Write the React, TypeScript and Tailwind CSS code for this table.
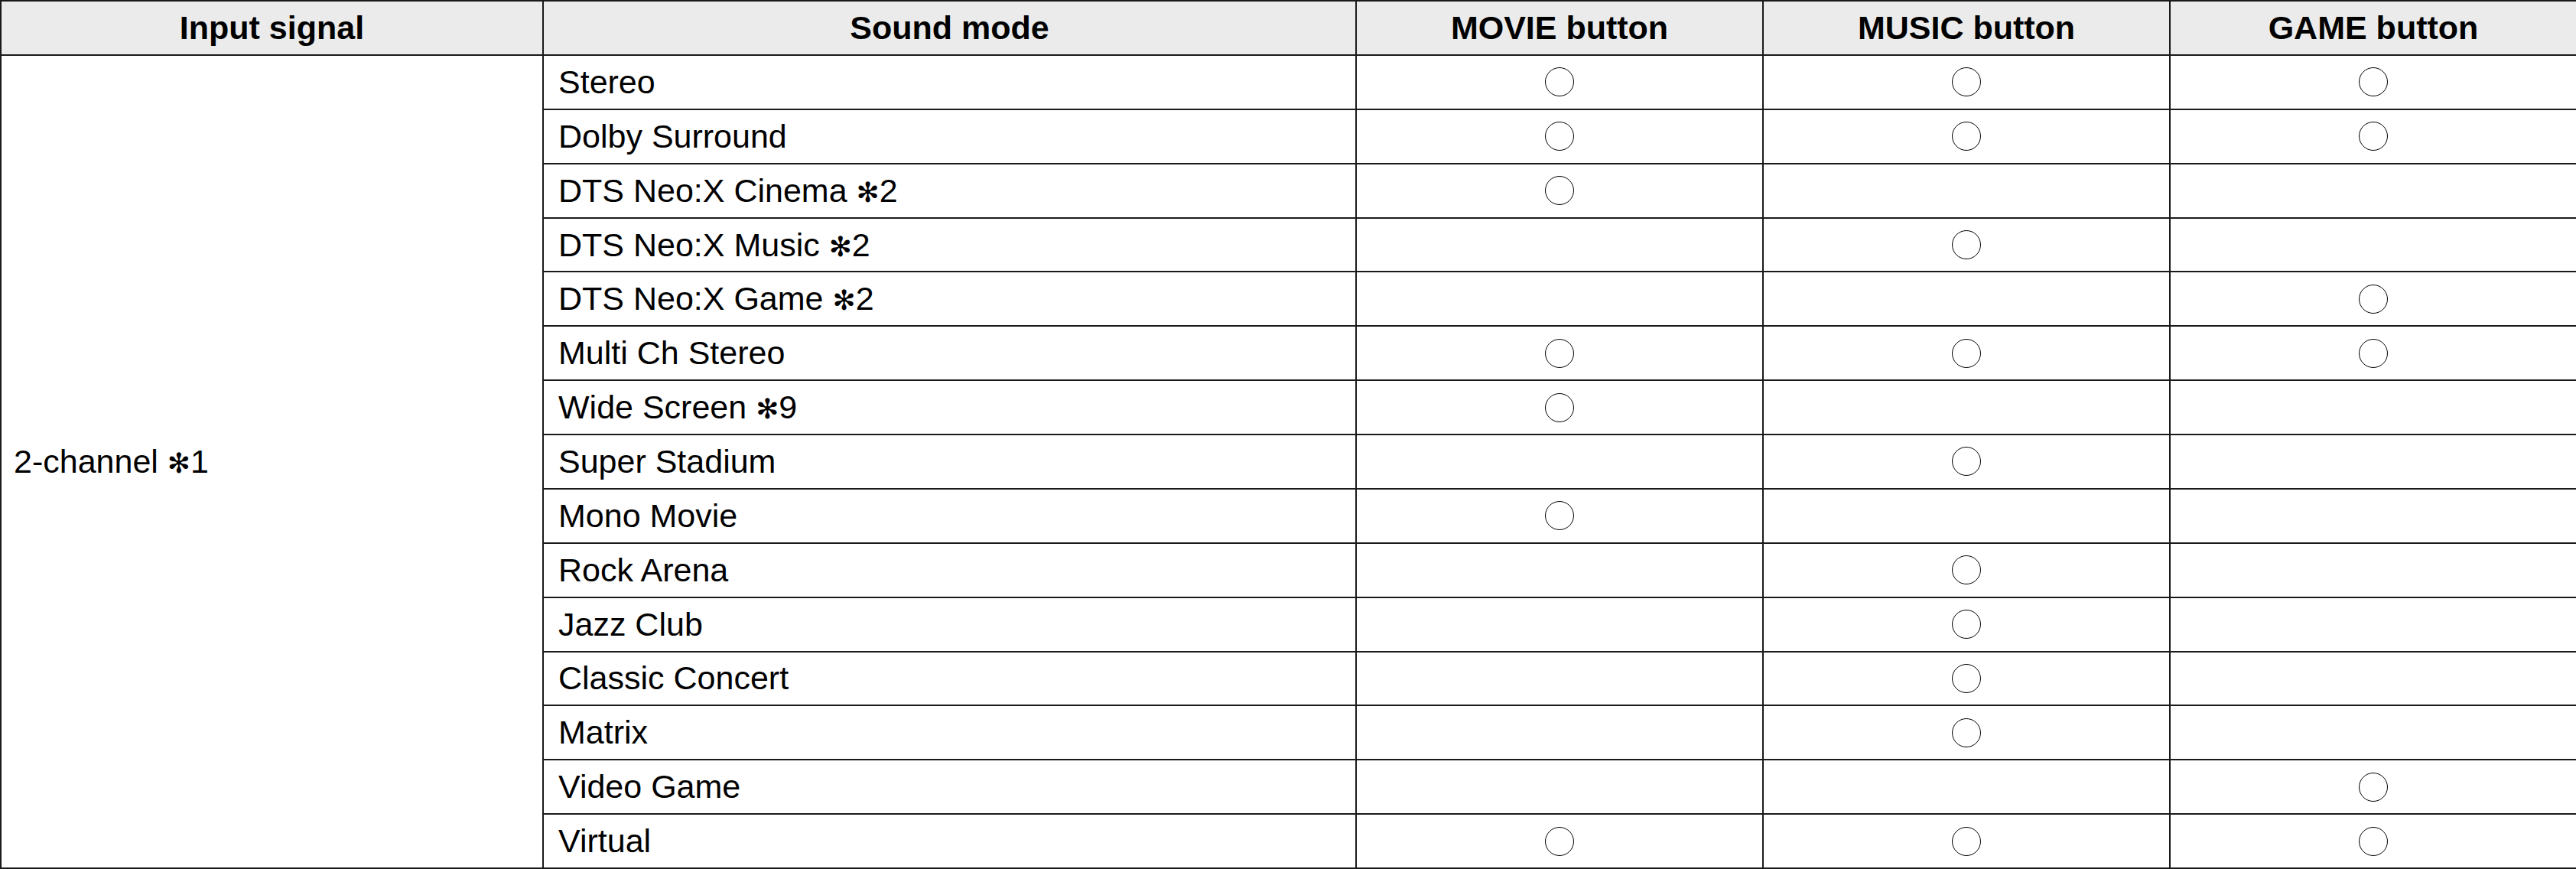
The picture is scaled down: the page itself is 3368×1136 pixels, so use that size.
import React from 'react';

type Mode = { name: string; note?: string; movie?: boolean; music?: boolean; game?: boolean };

const modes: Mode[] = [
  { name: 'Stereo', movie: true, music: true, game: true },
  { name: 'Dolby Surround', movie: true, music: true, game: true },
  { name: 'DTS Neo:X Cinema', note: '2', movie: true },
  { name: 'DTS Neo:X Music', note: '2', music: true },
  { name: 'DTS Neo:X Game', note: '2', game: true },
  { name: 'Multi Ch Stereo', movie: true, music: true, game: true },
  { name: 'Wide Screen', note: '9', movie: true },
  { name: 'Super Stadium', music: true },
  { name: 'Mono Movie', movie: true },
  { name: 'Rock Arena', music: true },
  { name: 'Jazz Club', music: true },
  { name: 'Classic Concert', music: true },
  { name: 'Matrix', music: true },
  { name: 'Video Game', game: true },
  { name: 'Virtual', movie: true, music: true, game: true },
];

const headers = ['Input signal', 'Sound mode', 'MOVIE button', 'MUSIC button', 'GAME button'];

function Label({ text, note }: { text: string; note?: string }) {
  return (
    <span className="whitespace-pre">
      {text}
      {note && (
        <>
          {' '}
          <span className="font-['DejaVu_Sans',sans-serif] text-[36px] font-bold">✻</span>
          {note}
        </>
      )}
    </span>
  );
}

function Mark({ on }: { on?: boolean }) {
  return (
    <div className="flex items-center justify-center bg-white">
      {on && <div className="h-[38px] w-[38px] rounded-full border-[1.6px] border-black" />}
    </div>
  );
}

export default function App() {
  return (
    <div className="h-[1136px] w-[3368px] bg-white font-['Liberation_Sans',Arial,sans-serif] text-[43px] text-black">
      <div className="grid h-full w-full grid-cols-[707px_1061px_530px_530px_530px] grid-rows-[69px_repeat(15,1fr)] gap-[2px] bg-[#1a1a1a] p-[2px]">
        {headers.map((h) => (
          <div key={h} className="flex items-center justify-center bg-[#ebebeb] font-bold leading-none">
            {h}
          </div>
        ))}
        <div className="row-span-15 flex items-center bg-white pl-[16px] leading-none">
          <Label text="2-channel" note="1" />
        </div>
        {modes.map((m) => (
          <React.Fragment key={m.name}>
            <div className="flex items-center bg-white pl-[19px] leading-none">
              <Label text={m.name} note={m.note} />
            </div>
            <Mark on={m.movie} />
            <Mark on={m.music} />
            <Mark on={m.game} />
          </React.Fragment>
        ))}
      </div>
    </div>
  );
}
